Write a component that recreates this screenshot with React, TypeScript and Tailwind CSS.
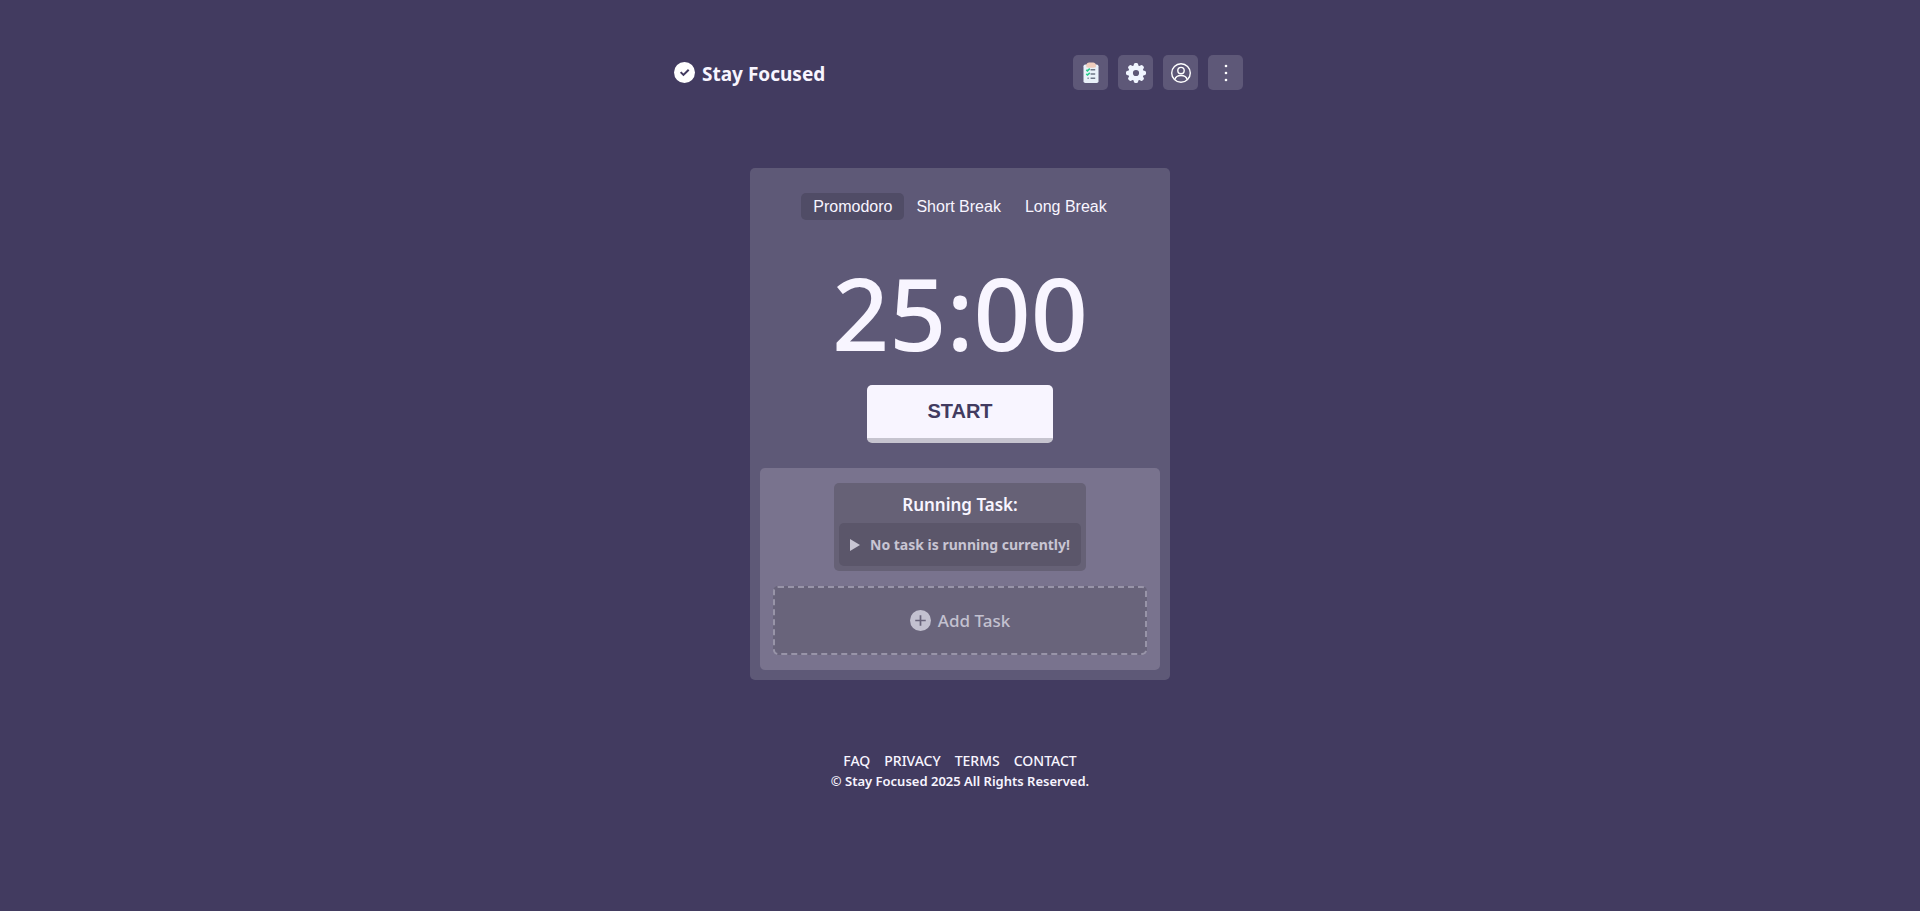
import { useState } from "react";

const modes = [
  { label: "Promodoro", time: "25:00" },
  { label: "Short Break", time: "05:00" },
  { label: "Long Break", time: "15:00" },
];

const footerLinks = ["FAQ", "PRIVACY", "TERMS", "CONTACT"];

function CheckBadge() {
  return (
    <svg viewBox="0 0 24 24" className="size-[21px]" aria-hidden="true">
      <circle cx="12" cy="12" r="12" fill="#ffffff" />
      <path d="M7.6 11.6l3.200 3.200 6-6" fill="none" stroke="#423b60" strokeWidth="2.300" />
    </svg>
  );
}

function ClipboardIcon() {
  return (
    <svg viewBox="0 0 20 22" className="h-[22px] w-5" aria-hidden="true">
      <rect x="2.5" y="2.500" width="15" height="18.5" rx="1.8" fill="#e9f1f9" />
      <path d="M5.300 5.200V3C5.300 1.800 6.600.4 8.200.4h3.900c1.600 0 2.800 1.400 2.800 2.600v2.200q-4.800 1.200-9.600 0z" fill="#f0cdbd" />
      <path d="M5.3 7.800l1.200 1.100 2.3-2.200M5.3 11.900l1.200 1.100 2.3-2.200" fill="none" stroke="#27c98b" strokeWidth="1.6" />
      <path d="M9.6 7.800h4.600M9.6 12h4.600M9.6 16.200h4.600" stroke="#6f7787" strokeWidth="1.5" />
      <path d="M6.400 16.200h1.500" stroke="#8b93a3" strokeWidth="1.5" />
    </svg>
  );
}

function GearIcon() {
  const teeth = [0, 45, 90, 135, 180, 225, 270, 315];
  return (
    <svg viewBox="0 0 20 20" className="size-5" aria-hidden="true">
      <g fill="#f0f5ff">
        {teeth.map((angle) => (
          <path
            key={angle}
            d="M6.800 4.500L8 1Q8.300 0 9.300 0h1.400q1 0 1.300 1L13.200 4.500z"
            transform={`rotate(${angle} 10 10)`}
          />
        ))}
      </g>
      <circle cx="10" cy="10" r="5.300" fill="none" stroke="#f0f5ff" strokeWidth="4.400" />
    </svg>
  );
}

function UserIcon() {
  return (
    <svg viewBox="0 0 20 20" className="size-5" fill="none" stroke="#ffffff" strokeWidth="1.4" aria-hidden="true">
      <circle cx="10" cy="10" r="9.3" />
      <circle cx="10" cy="7.6" r="3.2" />
      <path d="M3.9 16.5c.6-2.5 3-4 6.1-4s5.500 1.500 6.100 4" />
    </svg>
  );
}

function DotsIcon() {
  return (
    <svg viewBox="0 0 20 20" className="size-5" fill="#ffffff" aria-hidden="true">
      <circle cx="10" cy="3" r="1.300" />
      <circle cx="10" cy="10" r="1.300" />
      <circle cx="10" cy="17" r="1.300" />
    </svg>
  );
}

const actions = [
  { label: "Tasks", icon: <ClipboardIcon /> },
  { label: "Settings", icon: <GearIcon /> },
  { label: "Account", icon: <UserIcon /> },
  { label: "More", icon: <DotsIcon /> },
];

export default function App() {
  const [mode, setMode] = useState(0);

  return (
    <div className="flex min-h-screen flex-col items-center bg-[#423b60] font-['Noto_Sans',sans-serif] text-[#f8f5ff]">
      <header className="flex w-full max-w-[600px] items-center justify-between pt-[55px] pr-[17px] pl-[14px]">
        <a href="#" className="flex items-center gap-[7px]">
          <CheckBadge />
          <h1 className="pt-0.5 text-[19px] leading-7 font-bold">Stay Focused</h1>
        </a>
        <nav className="flex gap-[10px]">
          {actions.map((action) => (
            <button
              key={action.label}
              type="button"
              aria-label={action.label}
              className="flex size-[35px] items-center justify-center rounded-[5px] bg-[#5e5878]"
            >
              {action.icon}
            </button>
          ))}
        </nav>
      </header>

      <main className="mt-[78px] flex w-full max-w-[420px] flex-col items-center rounded-[5px] bg-[#5e5977] px-[10px] pt-[25px] pb-[10px]">
        <div className="flex font-['Liberation_Sans',Arial,sans-serif] text-base leading-[27px]">
          {modes.map((item, index) => (
            <button
              key={item.label}
              type="button"
              aria-pressed={index === mode}
              onClick={() => setMode(index)}
              className={`rounded-[5px] px-3 ${index === mode ? "bg-[#504c66]" : ""}`}
            >
              {item.label}
            </button>
          ))}
        </div>

        <div className="mt-8 text-[100px] leading-[120px] font-medium">{modes[mode].time}</div>

        <button
          type="button"
          className="mt-[13px] h-[58px] w-[186px] rounded-[5px] border-b-[5px] border-[#c6c4cf] bg-[#f8f5ff] pb-0.5 font-['Liberation_Sans',Arial,sans-serif] text-xl font-bold text-[#423b60]"
        >
          START
        </button>

        <section className="mt-[25px] flex w-full flex-col items-center rounded-[5px] bg-[#79738e] px-[13px] py-[15px]">
          <div className="w-[252px] rounded-[5px] bg-[#666176] p-[5px] text-center">
            <h2 className="pt-[5px] pb-1.5 text-[17px] leading-6 font-semibold">Running Task:</h2>
            <p className="flex h-[43px] items-center justify-center gap-[10px] rounded-[5px] bg-[#5b566a] text-sm font-bold text-[#c8c5d3]">
              <svg viewBox="0 0 10 12" className="h-3 w-[10px]" fill="#c8c5d3" aria-hidden="true">
                <path d="M0 0l10 6-10 6z" />
              </svg>
              No task is running currently!
            </p>
          </div>
          <button
            type="button"
            className="mt-[15px] flex h-[69px] w-full items-center justify-center gap-[7px] rounded-[5px] border-2 border-dashed border-[#9894a8] bg-[#69647b] text-[17px] font-medium text-[#c3c1d0]"
          >
            <svg viewBox="0 0 22 22" className="size-[21px]" aria-hidden="true">
              <circle cx="11" cy="11" r="11" fill="#c3c1d0" />
              <path d="M11 5.500v11M5.500 11h11" stroke="#69647b" strokeWidth="1.800" />
            </svg>
            Add Task
          </button>
        </section>
      </main>

      <footer className="mt-[71px] flex flex-col items-center pb-10 text-[13px] leading-5 font-semibold">
        <nav className="flex gap-[14px] text-sm font-medium">
          {footerLinks.map((link) => (
            <a key={link} href="#">
              {link}
            </a>
          ))}
        </nav>
        <p>© Stay Focused 2025 All Rights Reserved.</p>
      </footer>
    </div>
  );
}
